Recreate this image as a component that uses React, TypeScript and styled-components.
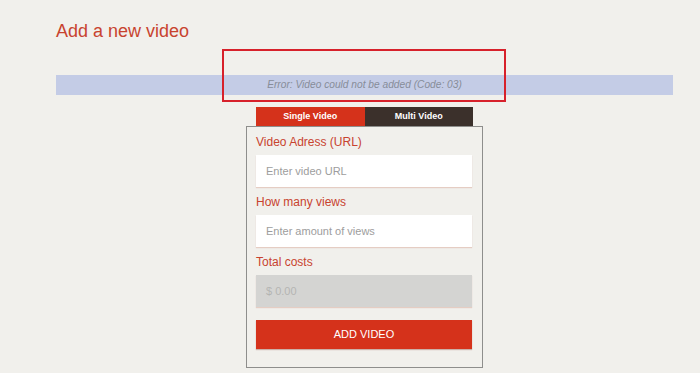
import React from 'react';
import styled, { createGlobalStyle } from 'styled-components';

const GlobalStyle = createGlobalStyle`
  html, body {
    margin: 0;
    padding: 0;
    background: #f1f0ec;
    font-family: 'Liberation Sans', Arial, sans-serif;
  }
`;

const Page = styled.div`
  position: relative;
  width: 700px;
  height: 373px;
  overflow: hidden;
  padding: 20px 0 0 56px;
  box-sizing: border-box;
`;

const Title = styled.h1`
  margin: 0;
  font-size: 18px;
  line-height: 22px;
  font-weight: 400;
  color: #c8432f;
`;

const Content = styled.div`
  width: 617px;
  display: flex;
  flex-direction: column;
  align-items: center;
`;

const ErrorBar = styled.div`
  align-self: stretch;
  margin-top: 33px;
  height: 20px;
  line-height: 20px;
  background: #c4cce6;
  text-align: center;
  font-size: 10.2px;
  font-style: italic;
  color: #878c99;
`;

// annotation drawn over the page
const Highlight = styled.div`
  position: absolute;
  left: 222px;
  top: 49px;
  width: 280px;
  height: 49px;
  border: 2px solid #d7212b;
`;

const Form = styled.div`
  margin-top: 12px;
  width: 237px;
  display: flex;
  flex-direction: column;
`;

const Tabs = styled.div`
  display: flex;
  margin: 0 10px;
`;

const Tab = styled.div<{ $active?: boolean }>`
  flex: 1;
  height: 19px;
  line-height: 19px;
  text-align: center;
  font-size: 9px;
  font-weight: 700;
  color: #fff;
  background: ${p => (p.$active ? '#d5321b' : '#3b302b')};
`;

const Card = styled.div`
  border: 1px solid #8e8e8c;
  padding: 7px 10px 18px 9px;
  display: flex;
  flex-direction: column;
`;

const Label = styled.label`
  font-size: 12px;
  line-height: 16px;
  color: #c8432f;
  margin-bottom: 5px;
`;

const Field = styled.div<{ $disabled?: boolean }>`
  height: 32px;
  line-height: 32px;
  padding: 0 10px;
  font-size: 11px;
  color: ${p => (p.$disabled ? '#b4b4b2' : '#9d9d9d')};
  background: ${p => (p.$disabled ? '#d4d4d2' : '#ffffff')};
  box-shadow: 0 1px 1px rgba(205, 140, 120, 0.35);
  margin-bottom: 7px;
`;

const Button = styled.div`
  margin-top: 6px;
  height: 29px;
  line-height: 29px;
  text-align: center;
  font-size: 11px;
  color: #fff;
  background: #d5321b;
  box-shadow: 0 1px 1px rgba(120, 30, 10, 0.3);
`;

const fields = [
  { label: 'Video Adress (URL)', placeholder: 'Enter video URL' },
  { label: 'How many views', placeholder: 'Enter amount of views' },
  { label: 'Total costs', placeholder: '$ 0.00', disabled: true },
];

const App = () => {
  return (
    <>
      <GlobalStyle />
      <Page>
        <Title>Add a new video</Title>
        <Content>
          <ErrorBar>Error: Video could not be added (Code: 03)</ErrorBar>
          <Form>
            <Tabs>
              <Tab $active>Single Video</Tab>
              <Tab>Multi Video</Tab>
            </Tabs>
            <Card>
              {fields.map(f => (
                <React.Fragment key={f.label}>
                  <Label>{f.label}</Label>
                  <Field $disabled={f.disabled}>{f.placeholder}</Field>
                </React.Fragment>
              ))}
              <Button>ADD VIDEO</Button>
            </Card>
          </Form>
        </Content>
        <Highlight />
      </Page>
    </>
  );
};

export default App;
